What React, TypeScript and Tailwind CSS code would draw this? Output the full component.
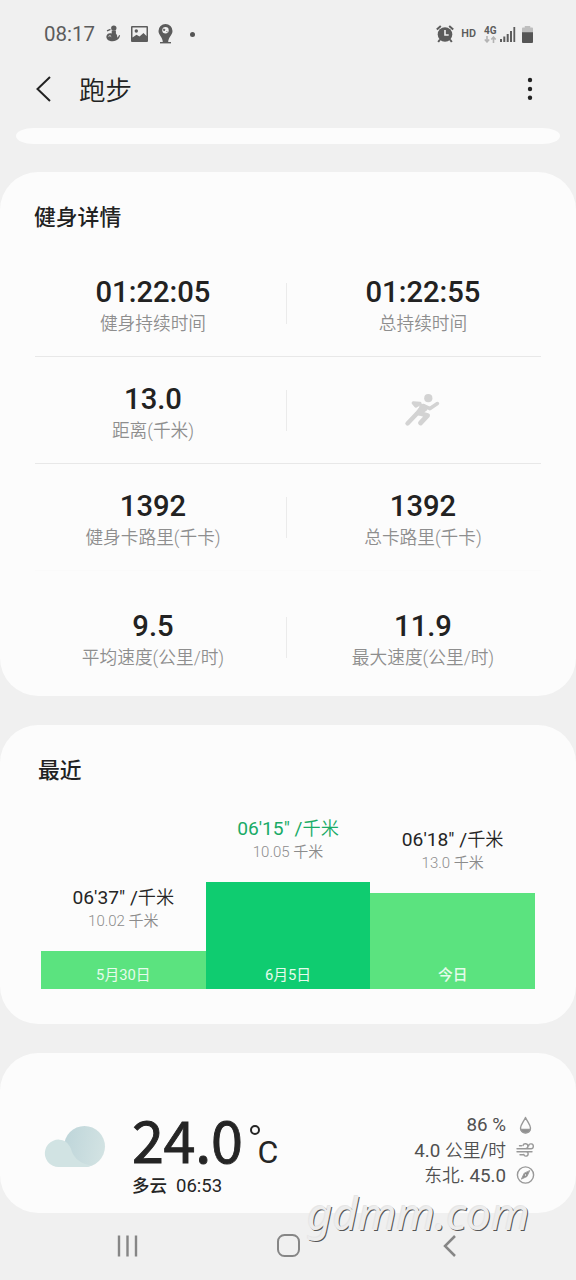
import type { ReactNode } from "react";

const DETAILS: { value: string; label: string }[][] = [
  [
    { value: "01:22:05", label: "健身持续时间" },
    { value: "01:22:55", label: "总持续时间" },
  ],
  [{ value: "13.0", label: "距离(千米)" }],
  [
    { value: "1392", label: "健身卡路里(千卡)" },
    { value: "1392", label: "总卡路里(千卡)" },
  ],
  [
    { value: "9.5", label: "平均速度(公里/时)" },
    { value: "11.9", label: "最大速度(公里/时)" },
  ],
];

const RECENT = [
  { pace: "06'37\" /", distance: "10.02 千米", date: "5月30日", height: "h-[38px]", bar: "bg-[#5be37f]", text: "text-[#252525]", day: "font-normal" },
  { pace: "06'15\" /", distance: "10.05 千米", date: "6月5日", height: "h-[107px]", bar: "bg-[#0fcc70]", text: "text-[#19ab66]", day: "font-normal" },
  { pace: "06'18\" /", distance: "13.0 千米", date: "今日", height: "h-[96px]", bar: "bg-[#5be37f]", text: "text-[#252525]", day: "font-medium" },
];

function Runner() {
  return (
    <svg className="mt-[36px] mr-[2px] h-[34px] w-[36px]" viewBox="0 0 36 34" fill="none" stroke="#d3d3d3" strokeLinecap="round" strokeLinejoin="round">
      <circle cx="24.300" cy="5.200" r="4.100" fill="#d3d3d3" stroke="none" />
      <path d="M9.300 10 11.800 13 16 10.500Z" fill="#d3d3d3" strokeWidth="3.400" />
      <path d="M19.500 12.500 26 15.600 33.400 10.600" strokeWidth="3.600" />
      <path d="M19 13 13 20.500 3.500 30.500" strokeWidth="4.400" />
      <path d="M20.500 14 15 20 23.500 22.500 16.500 30" strokeWidth="4.800" />
      <path d="M17.500 13 21.500 16 15.500 20.500Z" fill="#d3d3d3" strokeWidth="4" />
    </svg>
  );
}

function Metric({ value, label }: { value: string; label: string }) {
  return (
    <>
      <div className="mt-[26px] h-[33px] text-[29.200px] leading-[33px] font-medium text-[#222]">{value}</div>
      <div className="mt-[2px] h-[26px] text-[17.700px] leading-[26px] font-[350] whitespace-nowrap text-[#8e8e8e]">{label}</div>
    </>
  );
}

function StatusBar() {
  return (
    <div className="flex h-[68px] shrink-0 items-center pr-[43px] pl-[44px] text-[#5c5c5c]">
      <span className="w-[53px] text-[20.500px] leading-6 whitespace-nowrap">08:17</span>
      <svg className="ml-[8px] h-[18px] w-[16px]" viewBox="0 0 16 18" fill="currentColor">
        <circle cx="8.800" cy="3.100" r="2.700" />
        <path d="M6.700 5.500h4.200v3c1.200 1.200 1.500 2.800 1.200 4.200 1-.7 1.700-1.700 2-2.800l1 .5c-.5 2.600-2.200 4.400-4.200 5.100C8.600 16.700 4 16.400 2.200 14.200.8 12.600 1.200 10 2.900 8.800 4 8 5.500 8 6.700 8.600Z" />
        <path d="M2 5.800 5.500 4.300" stroke="currentColor" strokeWidth="1.300" />
        <path d="M3.500 11.300c.8-.8 2-.6 2.700.3" stroke="#f0f0f0" strokeWidth="1" fill="none" />
      </svg>
      <svg className="ml-[10px] h-[16px] w-[17px]" viewBox="0 0 17 16">
        <path fill="currentColor" fillRule="evenodd" d="M1 0h15q1 0 1 1v14q0 1-1 1H1q-1 0-1-1V1Q0 0 1 0ZM1.500 1.500v10l4-2.700 3 1.700 4-3.500 3 3V1.500Z" />
        <circle cx="5.300" cy="5" r="1.700" fill="currentColor" />
      </svg>
      <svg className="ml-[10px] h-[20px] w-[15px]" viewBox="0 0 15 20" fill="currentColor">
        <path d="M7.500 0a7 7 0 0 1 7 7c0 4-4.300 6.500-4.300 11h-5.400C4.800 13.500.5 11 .5 7a7 7 0 0 1 7-7Z" />
        <path d="M2 18h11v1.400H2z" />
        <circle cx="7.500" cy="6.300" r="3.200" fill="#f0f0f0" />
        <path d="m5.500 5 1.500.5-1 1.500ZM8.500 7l1 1.400" stroke="currentColor" strokeWidth=".8" />
      </svg>
      <span className="ml-[17px] size-[5px] rounded-full bg-[#555]" />
      <span className="grow" />
      <svg className="h-[18px] w-[18px]" viewBox="0 0 18 18" fill="currentColor">
        <circle cx="9" cy="9.500" r="7.300" />
        <path d="M.8 4.500 4.800 1M17.200 4.500 13.200 1M4 14.500 2.200 17M14 14.500 15.800 17" stroke="currentColor" strokeWidth="2" />
        <path d="M9 5v5h3.700" stroke="#f0f0f0" strokeWidth="1.600" fill="none" />
      </svg>
      <span className="ml-[7px] text-[10.800px] leading-4 font-semibold">HD</span>
      <span className="ml-[8px] flex w-[13px] flex-col">
        <span className="text-[10px] leading-[9px] font-bold">4G</span>
        <svg className="mt-[1px] h-[7px] w-[13px]" viewBox="0 0 13 7" fill="none" stroke="#b4b4b4" strokeWidth="1.600">
          <path d="M3 0v5.500M.8 3.500 3 5.900l2.200-2.400M9.500 7V1.500M7.300 3.500l2.200-2.400 2.200 2.400" />
        </svg>
      </span>
      <svg className="ml-[3px] h-[15px] w-[16px]" viewBox="0 0 16 15" fill="currentColor">
        <path d="M0 12h2v3H0zM3.300 9.500h2V15h-2zM6.700 7h2v8h-2zM10 4h2v11h-2zM13.400 0h1.800v15h-1.800z" />
      </svg>
      <svg className="ml-[6px] h-[17px] w-[11px]" viewBox="0 0 12 17" preserveAspectRatio="none">
        <path d="M3 0h6v1.500h2q1 0 1 1V7H0V2.500q0-1 1-1h2Z" fill="#bebebe" />
        <path d="M0 6.300h12V16q0 1-1 1H1q-1 0-1-1Z" fill="#555" />
      </svg>
    </div>
  );
}

function WeatherLine({ text, children }: { text: ReactNode; children: ReactNode }) {
  return (
    <div className="flex h-[25px] items-center justify-end">
      <span className="pt-[2px] text-[18.800px] leading-[25px] whitespace-nowrap text-[#505050]">{text}</span>
      <svg className="ml-[10px] h-[18px] w-[19px]" viewBox="0 0 19 18" fill="none" stroke="#999" strokeWidth="1.400" strokeLinecap="round" strokeLinejoin="round">
        {children}
      </svg>
    </div>
  );
}

export default function App() {
  return (
    <div className="relative flex h-[1280px] w-[576px] flex-col overflow-hidden bg-[#f0f0f0] font-[Roboto,'Noto_Sans_CJK_SC',sans-serif]">
      <StatusBar />
      <header className="flex h-[60px] shrink-0 items-start pr-[43px] pl-[35px]">
        <svg className="mt-[8px] h-[26px] w-[17px]" viewBox="0 0 17 26" fill="none" stroke="#222" strokeWidth="2">
          <path d="M15 1 2.500 13 15 25" />
        </svg>
        <h1 className="mt-[3px] ml-[27px] text-[26.500px] leading-10 font-[350] text-[#222]">跑步</h1>
        <span className="grow" />
        <svg className="mt-[9px] h-[24px] w-[6px]" viewBox="0 0 6 24" fill="#222">
          <circle cx="3" cy="3" r="2.200" />
          <circle cx="3" cy="12" r="2.200" />
          <circle cx="3" cy="20.800" r="2.200" />
        </svg>
      </header>
      <div className="mx-4 h-4 shrink-0 rounded-[18px/8px] bg-[#fcfcfc]" />

      <section className="mt-[28px] h-[524px] shrink-0 rounded-[38px] bg-[#fcfcfc]">
        <h2 className="h-[78px] pt-[30px] pl-[34px] text-[21.800px] leading-8 font-medium text-[#222]">健身详情</h2>
        {DETAILS.map((row, i) => (
          <div key={i} className={i === 3 ? "mt-[13px]" : ""}>
            <div className="flex h-[106px] px-[18px] text-center">
              <div className="w-[268px]"><div className="w-[270px]"><Metric {...row[0]} /></div></div>
              <div className="mt-[33px] h-[41px] w-px bg-[#ebebeb]" />
              <div className="ml-px flex w-[270px] flex-col items-center">
                {row[1] ? <Metric {...row[1]} /> : <Runner />}
              </div>
            </div>
            {i < 3 && <div className={`mx-[35px] h-px ${i === 2 ? "bg-[#fafafa]" : "bg-[#e8e8e8]"}`} />}
          </div>
        ))}
      </section>

      <section className="mt-[29px] h-[299px] shrink-0 rounded-[38px] bg-[#fcfcfc]">
        <h2 className="h-[80px] pt-[30px] pl-[38px] text-[21.800px] leading-8 font-medium text-[#222]">最近</h2>
        <div className="mx-[41px] flex h-[184px] items-end">
          {RECENT.map((r) => (
            <div key={r.date} className="flex flex-1 flex-col items-center whitespace-nowrap">
              <div className={`h-[26px] text-[19.200px] leading-7 ${r.text}`}>
                {r.pace}
                <span className="text-[18.200px] font-[350]">千米</span>
              </div>
              <div className="mt-[1px] mb-[20px] text-[15px] leading-5 font-[350] text-[#8c8c8c]">{r.distance}</div>
              <div className={`flex w-full items-end justify-center pb-[4px] ${r.height} ${r.bar}`}>
                <span className={`text-[14.800px] leading-5 text-[#e6fbec] ${r.day}`}>{r.date}</span>
              </div>
            </div>
          ))}
        </div>
      </section>

      <section className="mt-[29px] flex h-[160px] shrink-0 rounded-[38px] bg-[#fcfcfc] pr-[41px] pl-[44px]">
        <svg className="mt-[73px] h-[42px] w-[62px]" viewBox="0 0 62 42">
          <defs>
            <linearGradient id="puff" x1="0" y1=".5" x2="1" y2=".7">
              <stop offset="0" stopColor="#bfd6da" />
              <stop offset="1" stopColor="#d3e3e3" />
            </linearGradient>
          </defs>
          <circle cx="40.500" cy="20.500" r="20.500" fill="url(#puff)" />
          <path d="M15 41A13.700 13.700 0 1 1 21.500 15.500C25 18 27 22 28 26C31 33 37 38 48 39.500L42 41Z" fill="#d1e3e3" />
        </svg>
        <div className="ml-[26px] flex flex-col">
          <div className="mt-[57px] flex h-[62px]">
            <span className="w-[113px] font-['Noto_Sans_CJK_SC',sans-serif] text-[57.500px] leading-[56px] font-normal tracking-[-0.300px] whitespace-nowrap text-[#252525] [-webkit-text-stroke:0.9px_#252525]">24.0</span>
            <span className="mt-[15px] ml-[5px] size-[10px] rounded-full border-2 border-[#252525]" />
            <span className="mt-[24px] -ml-[2.500px] text-[32px] leading-[36px] font-normal text-[#252525]">C</span>
          </div>
          <div className="flex h-7 items-center pt-px text-[17.500px] whitespace-nowrap text-[#252525]">
            <span className="font-medium">多云</span>
            <span className="ml-[9px] text-[18.500px]">06:53</span>
          </div>
        </div>
        <div className="mt-[59px] grow">
          <WeatherLine text="86 %">
            <path d="M9.500 1.500C7.500 6 4.500 9 4.500 12a5 5 0 0 0 10 0c0-3-3-6-5-10.500Z" />
            <path d="M5 13.500h9c0 4-9 4-9 0Z" fill="#8e8e8e" />
          </WeatherLine>
          <WeatherLine text={<>4.0 <span className="text-[17.800px] font-[350]">公里</span>/<span className="text-[17.800px] font-[350]">时</span></>}>
            <path d="M1 7.700h8.500a2.500 2.500 0 1 0-2.500-3.200M3.500 4.700h2M11 7.700h4a2.400 2.400 0 1 0-2.400-3M1 10.700h15M4 13.700h3.500M10 10.700a2.200 2.200 0 1 1-2.200 2.700" />
          </WeatherLine>
          <WeatherLine text={<><span className="text-[17.800px] font-[350]">东北</span>. 45.0</>}>
            <circle cx="9.500" cy="9" r="8.100" />
            <path d="M13.700 4.800 11 10.500 5.300 13.200 8 7.500Z" fill="#8e8e8e" strokeWidth=".8" />
            <circle cx="9.500" cy="9" r=".7" fill="#fff" stroke="none" />
          </WeatherLine>
        </div>
      </section>

      <nav className="flex h-[67px] items-start pt-[21px] pl-[117px]">
        <svg className="h-[23px] w-[21px]" viewBox="0 0 21 23" fill="none" stroke="#868686" strokeWidth="2.400">
          <path d="M2 1.500v21M10.500 1.500v21M19 1.500v21" />
        </svg>
        <div className="ml-[139px] size-[23px] rounded-[7.500px] border-[2.500px] border-[#868686]" />
        <svg className="ml-[143px] h-[23px] w-[14px]" viewBox="0 0 14 23" fill="none" stroke="#868686" strokeWidth="2.500">
          <path d="M12 2 2 12 12 22" />
        </svg>
      </nav>

      <div className="absolute top-[1187px] left-[307px] font-['Noto_Sans',sans-serif] text-[44px] leading-[52px] whitespace-nowrap text-[#ededed] italic [text-shadow:1px_1px_0_#555,-1px_-1px_0_#e6e6e6]">gdmm.com</div>
    </div>
  );
}
